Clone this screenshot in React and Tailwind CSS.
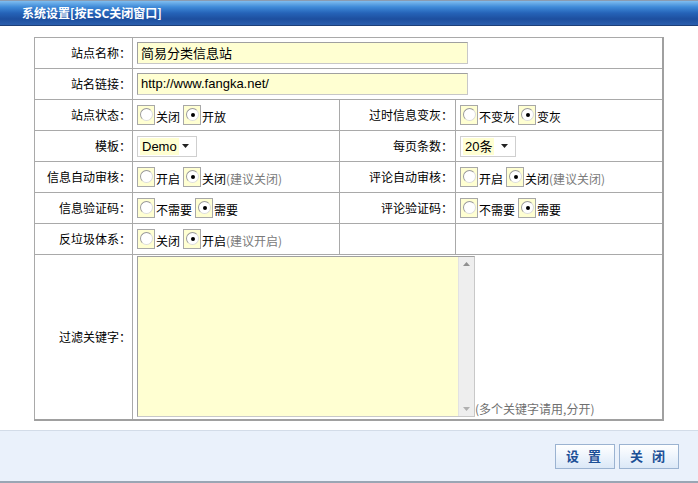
import React from "react";

const F = { fontFamily: '"Noto Sans CJK SC", "Liberation Sans", sans-serif' };

function Radio({ checked }) {
  return (
    <span className="inline-flex w-[18px] h-[20px] border border-[#a8a8a8] bg-[#ffffd2] items-start justify-start pl-[2px] pt-[2px] shrink-0">
      <span className="relative w-[13px] h-[13px] rounded-full border border-t-[#9a9a9a] border-l-[#9a9a9a] border-r-[#dcdcdc] border-b-[#dcdcdc] bg-white flex items-center justify-center">
        {checked && <span className="w-[4px] h-[4px] rounded-full bg-black" />}
      </span>
    </span>
  );
}

function RadioGroup({ items, checkedIndex, hint }) {
  return (
    <div className="flex items-center">
      {items.map((t, i) => (
        <span key={i} className="flex items-center mr-[3px]">
          <Radio checked={i === checkedIndex} />
          <span className="ml-[1px] text-[12px] text-black leading-none pt-[3px]">{t}</span>
        </span>
      ))}
      {hint && <span className="-ml-[3px] text-[12px] text-[#7a7a7a] leading-none pt-[3px]">{hint}</span>}
    </div>
  );
}

function Select({ value, width }) {
  return (
    <div className={`flex items-center h-[21px] border border-[#cfcfcf] bg-white px-[2px] ${width}`}>
      <span className="bg-[#ffffd2] px-[2px] text-[13px] leading-[17px] text-black" style={{ fontFamily: '"Liberation Sans", "Noto Sans CJK SC", sans-serif' }}>{value}</span>
      <span className="flex-1" />
      <svg width="7" height="4" viewBox="0 0 7 4" className="mr-[5px]"><path d="M0 0h7L3.5 4z" fill="#222" /></svg>
    </div>
  );
}

function Label({ children, pr = "pr-[6px]" }) {
  return (
    <td className={`border border-[#a9a9a9] text-right ${pr} text-[12px] text-black align-middle whitespace-nowrap`}>
      {children}
      <span className="inline-block w-[7px] text-left">：</span>
    </td>
  );
}

function Val({ children, colSpan }) {
  return <td colSpan={colSpan} className="border border-[#a9a9a9] pl-[4px] align-middle">{children}</td>;
}

export default function App() {
  return (
    <div className="w-[698px] h-[483px] bg-white flex flex-col overflow-hidden" style={F}>
      <div className="h-[26px] shrink-0 border-t border-t-[#8a9bb0] border-b border-b-[#1d3f78] flex items-center pl-[22px]"
        style={{ background: "linear-gradient(to bottom, #7fbdf0 0%, #3f8ad8 25%, #2563b8 50%, #1d4f9f 75%, #2b5fae 100%)" }}>
        <span className="text-white text-[12px] font-bold">系统设置[按ESC关闭窗口]</span>
      </div>
      <div className="flex-1 pt-[11px] pl-[34px]">
        <table className="w-[630px] border-collapse border-t border-l border-t-[#e3e3e3] border-l-[#e3e3e3] border-r-2 border-b-2 border-r-[#a0a0a0] border-b-[#a0a0a0] table-fixed">
          <colgroup>
            <col className="w-[98px]" />
            <col className="w-[207px]" />
            <col className="w-[116px]" />
            <col />
          </colgroup>
          <tbody>
            <tr className="h-[31px]">
              <Label>站点名称</Label>
              <Val colSpan={3}>
                <div className="w-[331px] h-[22px] border border-[#a0a0a0] border-r-[#c8c8c8] border-b-[#c8c8c8] bg-[#ffffd2] flex items-center pl-[3px] text-[13px] text-black">简易分类信息站</div>
              </Val>
            </tr>
            <tr className="h-[31px]">
              <Label>站名链接</Label>
              <Val colSpan={3}>
                <div className="w-[331px] h-[22px] border border-[#a0a0a0] border-r-[#c8c8c8] border-b-[#c8c8c8] bg-[#ffffd2] flex items-center pl-[3px] text-[13px] text-black" style={{ fontFamily: '"Liberation Sans", sans-serif' }}>http://www.fangka.net/</div>
              </Val>
            </tr>
            <tr className="h-[31px]">
              <Label>站点状态</Label>
              <Val><RadioGroup items={["关闭", "开放"]} checkedIndex={1} /></Val>
              <Label pr="pr-[7px]">过时信息变灰</Label>
              <Val><RadioGroup items={["不变灰", "变灰"]} checkedIndex={1} /></Val>
            </tr>
            <tr className="h-[31px]">
              <Label>模板</Label>
              <Val><Select value="Demo" width="w-[60px]" /></Val>
              <Label pr="pr-[7px]">每页条数</Label>
              <Val><Select value="20条" width="w-[56px]" /></Val>
            </tr>
            <tr className="h-[31px]">
              <Label>信息自动审核</Label>
              <Val><RadioGroup items={["开启", "关闭"]} checkedIndex={1} hint="(建议关闭)" /></Val>
              <Label pr="pr-[7px]">评论自动审核</Label>
              <Val><RadioGroup items={["开启", "关闭"]} checkedIndex={1} hint="(建议关闭)" /></Val>
            </tr>
            <tr className="h-[31px]">
              <Label>信息验证码</Label>
              <Val><RadioGroup items={["不需要", "需要"]} checkedIndex={1} /></Val>
              <Label pr="pr-[7px]">评论验证码</Label>
              <Val><RadioGroup items={["不需要", "需要"]} checkedIndex={1} /></Val>
            </tr>
            <tr className="h-[31px]">
              <Label>反垃圾体系</Label>
              <Val><RadioGroup items={["关闭", "开启"]} checkedIndex={1} hint="(建议开启)" /></Val>
              <td className="border border-[#a9a9a9]" />
              <td className="border border-[#a9a9a9]" />
            </tr>
            <tr className="h-[165px]">
              <Label>过滤关键字</Label>
              <td colSpan={3} className="border border-[#a9a9a9] pl-[4px] align-middle">
                <div className="flex items-end">
                  <div className="w-[338px] h-[161px] border border-[#a0a0a0] border-r-[#c8c8c8] border-b-[#c8c8c8] bg-[#ffffd2] flex justify-end">
                    <div className="w-[16px] h-full bg-[#eeeeee] border-l border-[#e2e2e2] flex flex-col justify-between items-center py-[5px]">
                      <svg width="7" height="4" viewBox="0 0 7 4"><path d="M3.5 0L7 4H0z" fill="#909090" /></svg>
                      <svg width="7" height="4" viewBox="0 0 7 4"><path d="M0 0h7L3.5 4z" fill="#b0b0b0" /></svg>
                    </div>
                  </div>
                  <span className="text-[12px] text-[#707070] leading-none mb-[2px]">(多个关键字请用,分开)</span>
                </div>
              </td>
            </tr>
          </tbody>
        </table>
      </div>
      <div className="h-[53px] shrink-0 bg-[#eaf1fb] border-t border-t-[#d3dce8] border-b-2 border-b-[#9aa6b4] flex items-center justify-end pr-[19px] gap-[4px]">
        {["设 置", "关 闭"].map((t) => (
          <button key={t} className="w-[60px] h-[25px] border border-[#9bb3d1] text-[13px] font-bold text-[#1c4f96] tracking-[3px] flex items-center justify-center"
            style={{ background: "linear-gradient(to bottom, #ffffff 0%, #edf4fc 50%, #dbe8f7 100%)" }}>
            {t}
          </button>
        ))}
      </div>
    </div>
  );
}
